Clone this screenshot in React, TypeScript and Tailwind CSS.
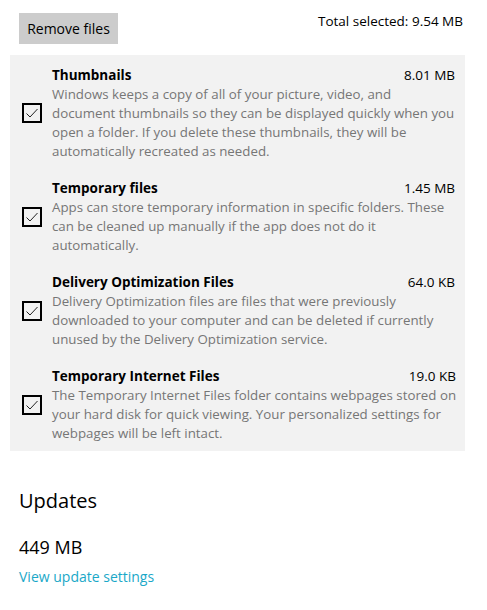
import React from "react";

type CleanupItem = {
  title: string;
  size: string;
  lines: string[];
};

// wrapped the way the settings page wraps them
const items: CleanupItem[] = [
  {
    title: "Thumbnails",
    size: "8.01 MB",
    lines: [
      "Windows keeps a copy of all of your picture, video, and",
      "document thumbnails so they can be displayed quickly when you",
      "open a folder. If you delete these thumbnails, they will be",
      "automatically recreated as needed.",
    ],
  },
  {
    title: "Temporary files",
    size: "1.45 MB",
    lines: [
      "Apps can store temporary information in specific folders. These",
      "can be cleaned up manually if the app does not do it",
      "automatically.",
    ],
  },
  {
    title: "Delivery Optimization Files",
    size: "64.0 KB",
    lines: [
      "Delivery Optimization files are files that were previously",
      "downloaded to your computer and can be deleted if currently",
      "unused by the Delivery Optimization service.",
    ],
  },
  {
    title: "Temporary Internet Files",
    size: "19.0 KB",
    lines: [
      "The Temporary Internet Files folder contains webpages stored on",
      "your hard disk for quick viewing. Your personalized settings for",
      "webpages will be left intact.",
    ],
  },
];

function CheckBox() {
  return (
    <div className="w-[20px] h-[20px] shrink-0 border-2 border-black flex items-center justify-center">
      <svg width="14" height="14" viewBox="0 0 14 14" fill="none">
        <path d="M1.5 7.5 L5 11 L12.5 3" stroke="#222" strokeWidth="1" />
      </svg>
    </div>
  );
}

function ItemRow({ item }: { item: CleanupItem }) {
  return (
    <div className="flex items-center gap-[10px]">
      <CheckBox />
      <div className="flex-1">
        <div className="flex justify-between text-[13.5px] leading-[20px] text-black">
          <span className="font-bold">{item.title}</span>
          <span>{item.size}</span>
        </div>
        <p className="text-[13.3px] leading-[19px] text-[#767676]">
          {item.lines.map((line) => (
            <span key={line} className="block whitespace-nowrap">
              {line}
            </span>
          ))}
        </p>
      </div>
    </div>
  );
}

export default function App() {
  return (
    <div className="w-[487px] h-[610px] bg-white" style={{ fontFamily: '"Open Sans", "Noto Sans", sans-serif' }}>
      <div className="flex justify-between items-start pt-[13px] pl-[19px] pr-[24px]">
        <button className="w-[99px] h-[31px] bg-[#cccccc] text-[14px] text-black">Remove files</button>
        <span className="text-[13.5px] leading-[16px] text-black">Total selected: 9.54 MB</span>
      </div>
      <div className="mt-[11px] mx-[10px] w-[455px] bg-[#f2f2f2] pt-[10px] pb-[8px] pl-[12px] pr-[10px] flex flex-col gap-[17px]">
        {items.map((item) => (
          <ItemRow key={item.title} item={item} />
        ))}
      </div>
      <div className="pl-[19px] pt-[36px]">
        <h2 className="text-[20px] leading-[28px] text-black">Updates</h2>
        <div className="mt-[20px] text-[18px] leading-[24px] text-black">449 MB</div>
        <a className="block mt-[8px] text-[14px] leading-[20px] text-[#1aa8c8]">View update settings</a>
      </div>
    </div>
  );
}
